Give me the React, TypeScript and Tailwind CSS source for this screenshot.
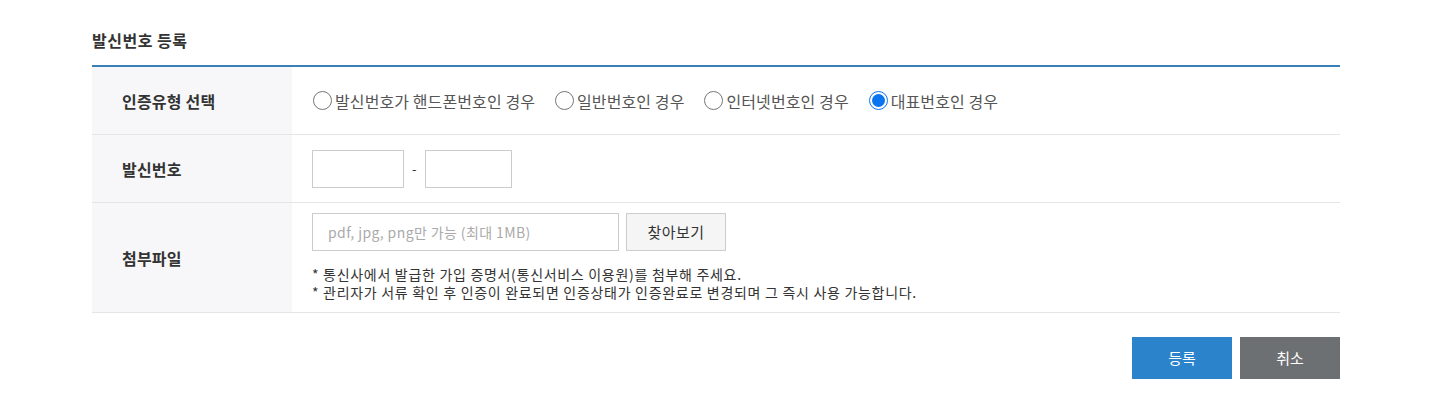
import { useState } from "react";

const types = ["발신번호가 핸드폰번호인 경우", "일반번호인 경우", "인터넷번호인 경우", "대표번호인 경우"];

export default function App() {
  const [type, setType] = useState(3);

  return (
    <div className="min-h-[397px] bg-white pl-[92px] pr-[97px] pt-[28px] text-[#333]" style={{ fontFamily: '"Noto Sans CJK KR", "Noto Sans", sans-serif' }}>
      <h2 className="text-[16px] font-bold leading-[24px] tracking-[0.5px]">발신번호 등록</h2>
      <div className="mt-[13px] border-t-2 border-[#3a80b7]">
        {/* 인증유형 */}
        <div className="flex h-[68px] border-b border-[#e5e5e5]">
          <div className="flex w-[200px] shrink-0 items-center bg-[#f7f7f9] pl-[30px] text-[16px] font-bold tracking-[0.2px]">인증유형 선택</div>
          <div className="flex items-center gap-[20px] pl-[21px] text-[16px] text-[#555] tracking-[0.1px]">
            {types.map((t, i) => (
              <label key={t} className="flex cursor-pointer items-center gap-[3px]" onClick={() => setType(i)}>
                <span className={"flex h-[19px] w-[19px] items-center justify-center rounded-full border " + (type === i ? "border-[#0b75f0]" : "border-[#767676]")}>
                  {type === i && <span className="h-[13px] w-[13px] rounded-full bg-[#0b75f0]" />}
                </span>
                {t}
              </label>
            ))}
          </div>
        </div>
        {/* 발신번호 */}
        <div className="flex h-[68px] border-b border-[#e5e5e5]">
          <div className="flex w-[200px] shrink-0 items-center bg-[#f7f7f9] pl-[30px] text-[16px] font-bold tracking-[0.2px]">발신번호</div>
          <div className="flex items-center pl-[20px]">
            <input type="text" className="h-[38px] w-[92px] border border-[#ccc] outline-none" />
            <span className="mx-[8px] text-[13px] text-[#333]">-</span>
            <input type="text" className="h-[38px] w-[87px] border border-[#ccc] outline-none" />
          </div>
        </div>
        {/* 첨부파일 */}
        <div className="flex h-[110px] border-b border-[#e5e5e5]">
          <div className="flex w-[200px] shrink-0 items-center bg-[#f7f7f9] pl-[30px] text-[16px] font-bold tracking-[0.2px]">첨부파일</div>
          <div className="flex flex-col pl-[20px] pt-[10px]">
            <div className="flex gap-[7px]">
              <input type="text" readOnly placeholder="pdf, jpg, png만 가능 (최대 1MB)" className="h-[38px] w-[307px] border border-[#ccc] px-[15px] text-[14px] tracking-[0.4px] outline-none placeholder:text-[#aaa]" />
              <button className="h-[38px] w-[100px] border border-[#ccc] bg-[#f5f5f5] text-[15px] tracking-[0.5px] text-[#333]">찾아보기</button>
            </div>
            <p className="mt-[14px] text-[14px] leading-[18px] text-[#333] tracking-[0.7px]">* 통신사에서 발급한 가입 증명서(통신서비스 이용원)를 첨부해 주세요.</p>
            <p className="text-[14px] leading-[18px] text-[#333] tracking-[0.7px]">* 관리자가 서류 확인 후 인증이 완료되면 인증상태가 인증완료로 변경되며 그 즉시 사용 가능합니다.</p>
          </div>
        </div>
      </div>
      <div className="mt-[24px] flex justify-end gap-[8px]">
        <button className="h-[42px] w-[100px] bg-[#2b83cc] text-[15px] text-white">등록</button>
        <button className="h-[42px] w-[100px] bg-[#6d7073] text-[15px] text-white">취소</button>
      </div>
    </div>
  );
}
